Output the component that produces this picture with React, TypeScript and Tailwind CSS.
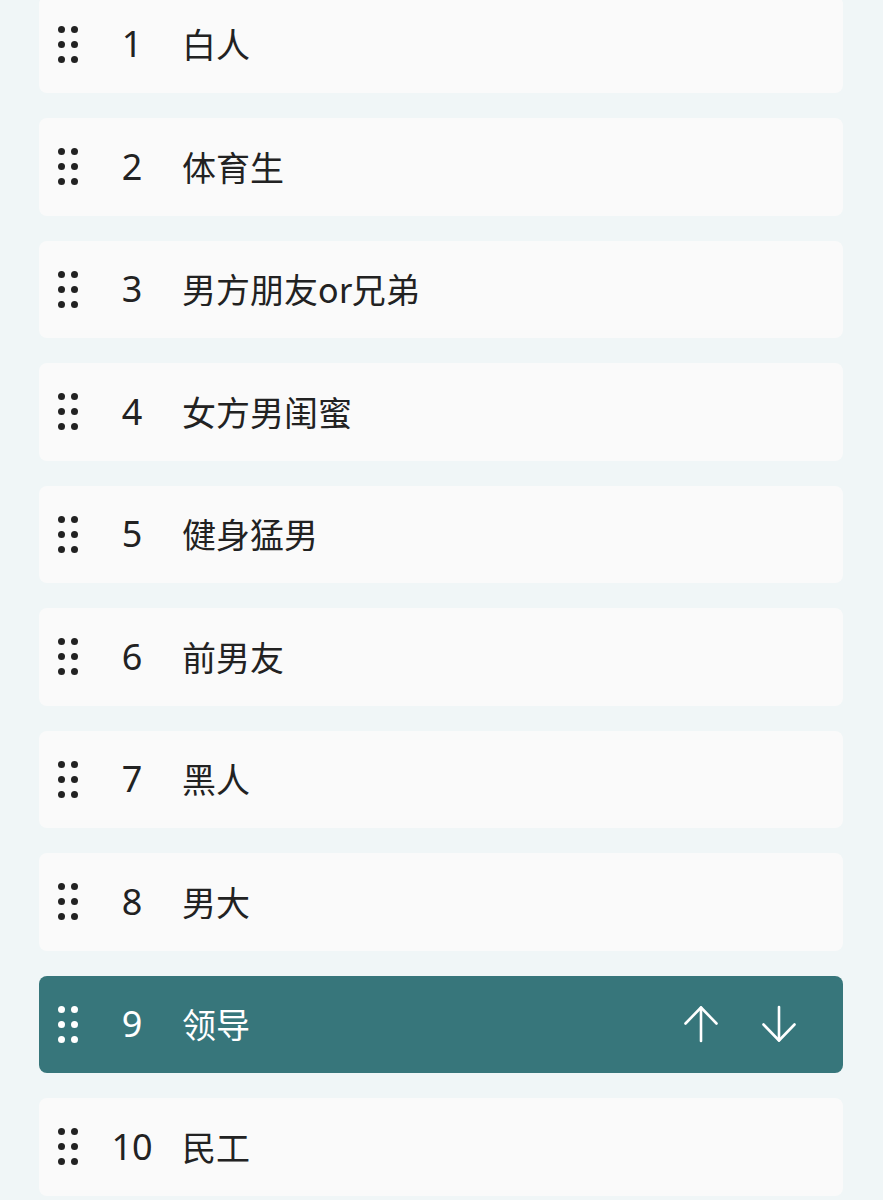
import React from "react";

const items = [
  "白人",
  "体育生",
  "男方朋友or兄弟",
  "女方男闺蜜",
  "健身猛男",
  "前男友",
  "黑人",
  "男大",
  "领导",
  "民工",
];

function Grip({ light }: { light: boolean }) {
  const dot = light ? "bg-white" : "bg-[#222222]";
  return (
    <div className="grid grid-cols-2 gap-x-[5.3px] gap-y-[7.6px]">
      {Array.from({ length: 6 }).map((_, i) => (
        <span key={i} className={`block h-[7.4px] w-[7.4px] rounded-full ${dot}`} />
      ))}
    </div>
  );
}

function Arrow({ down }: { down?: boolean }) {
  return (
    <svg
      width="36"
      height="38"
      viewBox="0 0 36 38"
      fill="none"
      stroke="currentColor"
      strokeWidth="2.6"
      strokeLinecap="round"
      strokeLinejoin="round"
      className={down ? "rotate-180" : ""}
    >
      <path d="M18 2.5V36" />
      <path d="M2.5 18.5L18 2.5l15.5 16" />
    </svg>
  );
}

export default function App() {
  const active = 8;
  return (
    <div
      className="min-h-[1200px] w-full overflow-hidden bg-[#f0f6f7] pl-[39px] pr-[40px]"
      style={{ fontFamily: '"Noto Sans CJK SC", "Noto Sans", sans-serif' }}
    >
      <div className="mt-[-4.5px] flex flex-col gap-[25px]">
        {items.map((label, i) => {
          const on = i === active;
          return (
            <div
              key={label}
              className={`flex h-[97.5px] items-center rounded-[8px] pl-[19px] pr-[46px] ${
                on ? "bg-[#37767b] text-white" : "bg-[#fafafa] text-[#222222]"
              }`}
            >
              <Grip light={on} />
              <span
                className="ml-[30px] w-[48px] text-center text-[36px] leading-none"
                style={{ fontFamily: '"Noto Sans", sans-serif' }}
              >
                {i + 1}
              </span>
              <span className="ml-[26px] flex-1 text-[34px] leading-none">{label}</span>
              {on && (
                <div className="flex items-center gap-[42px]">
                  <Arrow />
                  <Arrow down />
                </div>
              )}
            </div>
          );
        })}
      </div>
    </div>
  );
}
